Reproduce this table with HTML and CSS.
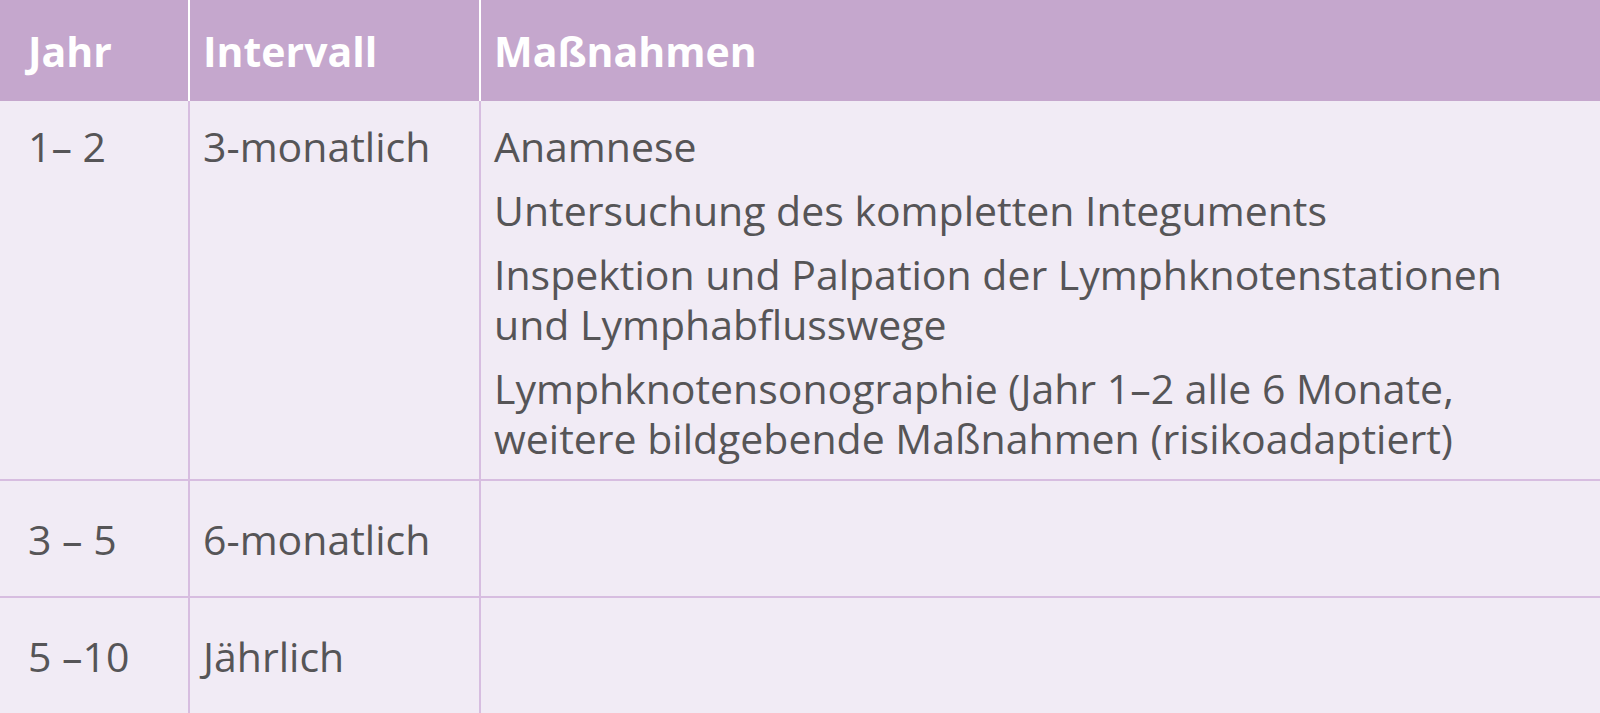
FILE: index.html
```html
<!DOCTYPE html>
<html lang="de">
<head>
  <meta charset="UTF-8" />
  <meta name="viewport" content="width=device-width, initial-scale=1.0"/>
  <title>Nachsorge</title>
  <link rel="stylesheet" href="styles.css">
</head>
<body>
  <table class="plan">
    <colgroup>
      <col class="col-year">
      <col class="col-interval">
      <col>
    </colgroup>
    <thead>
      <tr>
        <th>Jahr</th>
        <th>Intervall</th>
        <th>Maßnahmen</th>
      </tr>
    </thead>
    <tbody>
      <tr class="top">
        <td>1– 2</td>
        <td>3-monatlich</td>
        <td>
          <p>Anamnese</p>
          <p>Untersuchung des kompletten Integuments</p>
          <p>Inspektion und Palpation der Lymphknotenstationen<br>und Lymphabflusswege</p>
          <p>Lymphknotensonographie (Jahr 1–2 alle 6 Monate,<br>weitere bildgebende Maßnahmen (risikoadaptiert)</p>
        </td>
      </tr>
      <tr class="short">
        <td>3 – 5</td>
        <td>6-monatlich</td>
        <td></td>
      </tr>
      <tr class="short">
        <td>5 –10</td>
        <td>Jährlich</td>
        <td></td>
      </tr>
    </tbody>
  </table>
</body>
</html>
```

FILE: styles.css
```css
html, body {
  margin: 0;
  padding: 0;
  background: #f1ebf5;
}
body {
  font-family: "Open Sans", Arial, sans-serif;
  color: #565557;
}
.plan {
  width: 1600px;
  border-collapse: collapse;
  table-layout: fixed;
  font-size: 41px;
  line-height: 50px;
}
.col-year {
  width: 189px;
}
.col-interval {
  width: 291px;
}
.plan th {
  background: #c5a7cd;
  color: #fff;
  font-weight: bold;
  text-align: left;
  height: 101px;
  padding: 0 13px;
  box-sizing: border-box;
  border-right: 2px solid #fff;
  vertical-align: middle;
}
.plan th:last-child {
  border-right: none;
}
.plan td {
  border: 2px solid #d7bde0;
  padding: 0 13px;
  vertical-align: middle;
}
.plan tr > :first-child {
  padding-left: 28px;
  border-left: none;
}
.plan tr > :last-child {
  border-right: none;
}
.plan tbody tr:last-child td {
  border-bottom: none;
}
.plan tbody tr:first-child td {
  border-top: none;
}
.plan tr.top td {
  vertical-align: top;
  padding-top: 20px;
  padding-bottom: 16px;
}
.plan tr.short td {
  height: 115px;
}
.plan p {
  margin: 0 0 14px;
}
.plan p:last-child {
  margin-bottom: 0;
}
```
